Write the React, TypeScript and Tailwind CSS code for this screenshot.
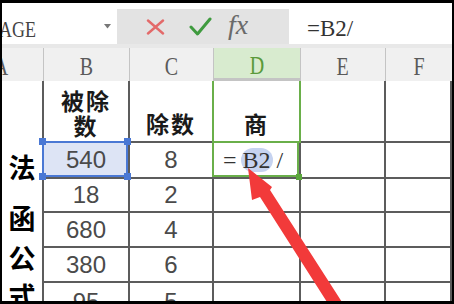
import React from 'react';

const cols = 'grid grid-cols-[42px_86px_84px_87px_85px_66px]';
const cell = 'border-r-2 border-b-2 border-[#5c5c5c] flex items-center justify-center';
const num = "font-['Liberation_Sans',sans-serif] text-[24px] text-[#4a4a4a] leading-none";
const cjk = "font-['Noto_Sans_CJK_SC',sans-serif] font-bold text-[23px] text-[#1a1a1a] tracking-[2px] leading-[25px] text-center";
const serif = "font-['Liberation_Serif',serif]";

const data: [string, string][] = [
  ['18', '2'],
  ['680', '4'],
  ['380', '6'],
  ['95', '5'],
];

function Handle({ pos }: { pos: string }) {
  return <div className={`absolute w-[7px] h-[7px] bg-[#4a78d4] ${pos}`} />;
}

export default function App() {
  return (
    <div className="w-[454px] h-[304px] bg-black pt-[3px] pb-[3px] px-[2px] overflow-hidden">
      <div className="relative h-full bg-white overflow-hidden flex flex-col">
        {/* formula bar */}
        <div className="flex h-[41px] shrink-0">
          <div className="relative w-[115px] overflow-hidden flex items-center pt-[10px]">
            <span className={`${serif} inline-block origin-left scale-x-75 text-[24px] text-[#444] leading-none ml-[-15px]`}>
              RAGE
            </span>
            <svg className="absolute left-[102px] top-[21px]" width="7" height="5" viewBox="0 0 7 5">
              <path d="M0 0 L7 0 L3.5 4.5 Z" fill="#777" />
            </svg>
          </div>
          <div className="w-[172px] mt-[6px] bg-[#e3e3e3] flex items-center pl-[29px]">
            <svg width="19" height="16" viewBox="0 0 19 16">
              <path d="M2 1.5 L17 14.5 M17 1.5 L2 14.5" stroke="#e36a6a" strokeWidth="2.4" strokeLinecap="round" />
            </svg>
            <svg className="ml-[24px]" width="23" height="20" viewBox="0 0 23 20">
              <path d="M2 10 L8.5 17 L21 2" stroke="#3f9b3f" strokeWidth="3" fill="none" strokeLinecap="round" strokeLinejoin="round" />
            </svg>
            <span className={`${serif} italic text-[28px] text-[#6a6a6a] leading-none ml-[16px] mt-[-4px]`}>fx</span>
          </div>
          <div className="flex-1 flex items-center pl-[18px] pt-[10px]">
            <span className={`${serif} text-[23px] text-[#333] leading-none`}>=B2/</span>
          </div>
        </div>
        <div className="h-[4px] shrink-0 bg-[#e8e8e8]" />

        {/* column headers */}
        <div className={`${cols} h-[33px] shrink-0 bg-[#f0f0f0]`}>
          {['A', 'B', 'C', 'D', 'E', 'F'].map((c, i) => (
            <div
              key={c}
              className={`flex items-center pt-[4px] overflow-hidden ${
                i === 0 ? 'justify-start' : 'justify-center'
              } ${i === 3 ? 'bg-[#d8ebcf] border-b-[3px] border-[#6aaf4a]' : ''} ${
                i < 5 ? 'border-r border-[#c4c4c4]' : ''
              }`}
            >
              <span
                className={`${serif} inline-block scale-x-[0.8] text-[25px] leading-none ${
                  i === 3 ? 'text-[#5a9a3a]' : 'text-[#5a5a5a]'
                } ${i === 0 ? 'ml-[-10px]' : ''}`}
              >
                {c}
              </span>
            </div>
          ))}
        </div>

        {/* sheet body */}
        <div className={`${cols} grid-rows-[62px_36px_34px_35px_35px_40px]`}>
          <div className="row-span-6 border-r-2 border-[#5c5c5c] flex flex-col items-center">
            {[
              ['法', 'mt-[71px]'],
              ['函', 'mt-[22px]'],
              ['公', 'mt-[11px]'],
              ['式', 'mt-[9px]'],
            ].map(([ch, m]) => (
              <span
                key={ch}
                className={`font-['Noto_Sans_CJK_SC',sans-serif] font-bold text-[27px] leading-[29px] text-black ${m}`}
              >
                {ch}
              </span>
            ))}
          </div>

          <div className={`${cell} !items-end pb-[3px]`}>
            <span className={cjk}>
              被除
              <br />数
            </span>
          </div>
          <div className={`${cell} !items-end pb-[5px]`}>
            <span className={cjk}>除数</span>
          </div>
          <div className={`${cell} !items-end pb-[5px] relative`}>
            <div className="absolute top-0 left-[-2px] right-[-2px] bottom-[-2px] border-x-2 border-b-2 border-[#6aaf4a]" />
            <span className={cjk}>商</span>
          </div>
          <div className={cell} />
          <div className={cell} />

          {/* row 2 */}
          <div className={`${cell} relative bg-[#dde4f5]`}>
            <div className="absolute top-[-2px] left-[-2px] right-0 bottom-0 border-2 border-[#4a78d4]">
              <Handle pos="left-[-5px] top-[-5px]" />
              <Handle pos="right-[-5px] top-[-5px]" />
              <Handle pos="left-[-5px] bottom-[-5px]" />
              <Handle pos="right-[-5px] bottom-[-5px]" />
            </div>
            <span className={num}>540</span>
          </div>
          <div className={cell}>
            <span className={num}>8</span>
          </div>
          <div className={`${cell} relative !justify-start pl-[9px]`}>
            <div className="absolute top-[-2px] left-[-2px] right-0 bottom-0 border-2 border-[#6aaf4a]">
              <div className="absolute right-[-5px] bottom-[-5px] w-[6px] h-[6px] bg-[#5aa63a]" />
            </div>
            <span className={`${serif} text-[24px] text-[#333] leading-none flex items-center`}>
              =<span className="ml-[4px] px-[2px] rounded-full bg-[#c6d3f0]">B2</span>
              <span className="ml-[4px]">/</span>
            </span>
          </div>
          <div className={cell} />
          <div className={cell} />

          {data.map(([a, b]) => (
            <React.Fragment key={a}>
              <div className={cell}>
                <span className={num}>{a}</span>
              </div>
              <div className={cell}>
                <span className={num}>{b}</span>
              </div>
              <div className={cell} />
              <div className={cell} />
              <div className={cell} />
            </React.Fragment>
          ))}
        </div>

        {/* red arrow */}
        <svg className="absolute left-0 top-0 pointer-events-none" width="450" height="298" viewBox="0 0 450 298">
          <polygon
            points="246,165 270,184 268,187 347,310 332,310 258,194 250,197"
            fill="#f23a3a"
          />
        </svg>
      </div>
    </div>
  );
}
